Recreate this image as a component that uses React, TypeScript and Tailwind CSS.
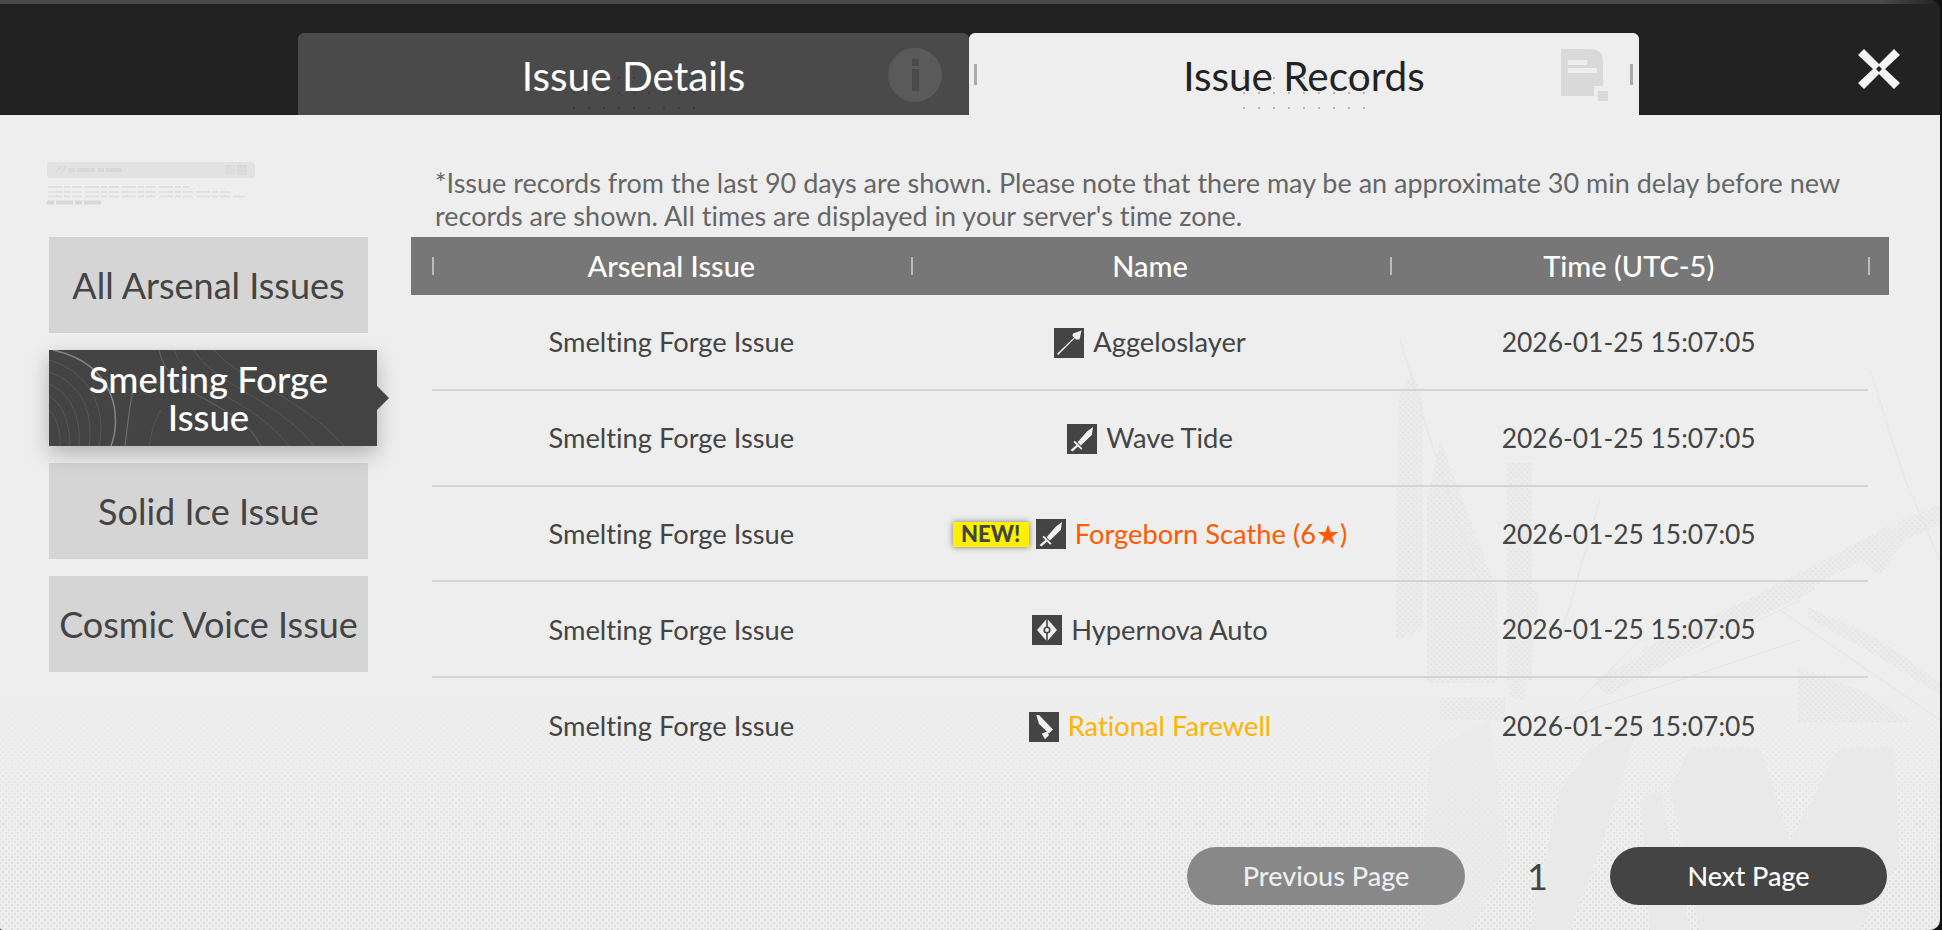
import React from "react";

const font = "font-['Lato','Noto_Sans',sans-serif] [font-variant-ligatures:none]";

type Weapon = "spear" | "sword" | "auto" | "pistol";

const rows: { name: string; icon: Weapon; color: string; isNew?: boolean }[] = [
  { name: "Aggeloslayer", icon: "spear", color: "text-[#444444]" },
  { name: "Wave Tide", icon: "sword", color: "text-[#444444]" },
  { name: "Forgeborn Scathe (6★)", icon: "sword", color: "text-[#ff5a00]", isNew: true },
  { name: "Hypernova Auto", icon: "auto", color: "text-[#444444]" },
  { name: "Rational Farewell", icon: "pistol", color: "text-[#ffb400]" },
];

const WeaponIcon = ({ type }: { type: Weapon }) => (
  <svg viewBox="0 0 30 30" className="w-[30px] h-[30px] shrink-0">
    <rect width="30" height="30" fill="#444444" />
    {type === "spear" && (
      <g fill="#f0f0f0">
        <path d="M27.5 2.5 L25.5 11.5 L22 11.5 L18.5 8 L19 5.5 Z" />
        <path d="M20 9.5 L20.8 10.3 L4.2 27 L3 25.8 Z" />
      </g>
    )}
    {type === "sword" && (
      <g fill="#f0f0f0">
        <path d="M26 3 L24.8 11 L13.8 21.5 L10.5 18.2 L20 7.5 Z" />
        <path d="M6.5 18 L7.8 16.8 L15.5 24.5 L14.2 25.7 Z" />
        <path d="M10 20.5 L11.5 22 L5.5 27.5 L3.5 26 Z" />
      </g>
    )}
    {type === "auto" && (
      <g>
        <path d="M15 3.5 L25 15 L15 26.5 L5 15 Z" fill="#f0f0f0" />
        <rect x="14.2" y="3" width="1.6" height="24" fill="#444444" />
        <circle cx="15" cy="15" r="3.6" fill="#444444" />
        <circle cx="15" cy="15" r="2" fill="#f0f0f0" />
      </g>
    )}
    {type === "pistol" && (
      <g fill="#f0f0f0">
        <path d="M7.3 3.3 L10 3 L24 17.5 L20 21.5 L10 12 Z" />
        <path d="M12.7 21.7 L18.3 19.3 L20 23.3 L16 27.3 Z" />
      </g>
    )}
  </svg>
);

// faint dotted artwork behind the table, drawn in page coordinates
const Watermark = () => (
  <svg viewBox="1240 115 700 815" className="absolute right-0 bottom-0 w-[700px] h-[815px]">
    <defs>
      <pattern id="dots" width="4" height="4" patternUnits="userSpaceOnUse" patternTransform="rotate(45)">
        <rect width="4" height="4" fill="#ececec" />
        <circle cx="2" cy="2" r="1.1" fill="#e3e3e3" />
      </pattern>
    </defs>
    <g fill="url(#dots)">
      <path d="M1398 400 L1412 370 L1423 400 L1423 630 L1396 640 Z" />
      <path d="M1427 500 L1440 440 L1497 590 L1497 683 L1427 683 Z" />
      <path d="M1507 463 L1532 463 L1532 680 L1507 680 Z" />
      <path d="M1595 680 L1890 525 L1900 540 L1606 696 Z" />
      <path d="M1640 650 L1810 570 L1816 590 L1650 668 Z" />
      <path d="M1509 697 L1530 590 L1540 592 L1524 700 Z" />
      <path d="M1798 667 L1860 690 L1915 723 L1798 723 Z" />
      <path d="M1808 607 L1880 640 L1940 682 L1940 695 L1875 655 L1808 618 Z" />
      <path d="M1440 697 L1505 697 L1505 720 L1440 720 Z" />
      <path d="M1860 560 L1900 520 L1940 505 L1940 525 L1905 540 L1880 575 Z" />
    </g>
    <g fill="#e9e9e9">
      <path d="M1690 747 L1760 747 L1790 840 L1840 747 L1894 747 L1900 860 L1860 930 L1700 930 L1670 790 Z" />
      <path d="M1560 790 L1590 750 L1640 720 L1600 850 L1570 930 L1530 930 Z" />
      <path d="M1430 750 L1490 720 L1510 860 L1470 930 L1420 930 Z" opacity="0.7" />
      <path d="M1640 800 L1660 790 L1690 930 L1650 930 Z" />
    </g>
    <g stroke="#e7e7e7" strokeWidth="1.5" fill="none">
      <path d="M1400 340 L1440 470 L1500 640" />
      <path d="M1870 370 L1905 480 L1940 560" />
      <path d="M1580 700 L1640 640 M1700 650 L1800 600 M1560 640 L1600 500" />
      <path d="M1560 720 L1800 640 M1780 610 L1940 720" />
    </g>
  </svg>
);

const SmallPreview = () => (
  <svg viewBox="0 0 210 46" className="w-[210px] h-[46px] ml-[-2px] mb-[29px]">
    <rect width="208" height="16" rx="3" fill="#e2e2e2" />
    <path d="M9 11 L14 4 M14 11 L19 4" stroke="#d8d8d8" strokeWidth="1.5" />
    <path d="M22 8 H28 M30 8 H48 M51 8 H57 M59 8 H75" stroke="#d8d8d8" strokeWidth="4" />
    <rect x="178" y="3" width="10" height="10" fill="#dcdcdc" />
    <rect x="190" y="3" width="10" height="10" fill="#dadada" />
    <g stroke="#e0e0e0" strokeWidth="2" strokeDasharray="14 2 6 2 10 3">
      <path d="M1 25 H142" />
      <path d="M1 30 H185" />
      <path d="M1 34.5 H198" />
    </g>
    <path d="M0 40.5 H7 M9 40.5 H26 M28 40.5 H35 M37 40.5 H54" stroke="#d8d8d8" strokeWidth="4" />
  </svg>
);

const SideButton = ({ label, active }: { label: string; active?: boolean }) =>
  active ? (
    <div className="relative w-[328px] h-[96px] bg-[#444444] shadow-[0_8px_20px_rgba(0,0,0,0.25)] flex items-center justify-center text-center text-white text-[36.5px] leading-[38px] pl-4 pr-[25px] font-medium">
      <svg viewBox="0 0 328 96" className="absolute inset-0 w-full h-full" fill="none" stroke="#ffffff" strokeOpacity="0.1">
        <path d="M4 0 C70 15 72 70 62 96" strokeOpacity="0.35" strokeWidth="1.5" />
        <path d="M0 10 C50 25 56 70 50 96" />
        <path d="M0 22 C38 35 44 70 40 96" />
        <path d="M0 34 C26 45 32 75 30 96" />
        <path d="M0 46 C16 55 22 80 20 96" />
        <path d="M0 60 C8 68 12 82 11 96" />
        <path d="M110 0 C120 50 190 50 212 96" strokeOpacity="0.18" />
        <path d="M125 0 C140 40 200 45 240 96" />
        <path d="M145 0 C165 35 230 50 265 96" />
        <path d="M165 0 C190 30 250 45 295 96" />
        <path d="M84 40 C80 60 78 80 76 96" strokeOpacity="0.25" />
        <path d="M112 60 C105 70 102 85 100 96" />
      </svg>
      <span className="relative">{label}</span>
      <div className="absolute right-[-12px] top-[36px] w-0 h-0 border-y-[12px] border-y-transparent border-l-[12px] border-l-[#444444]" />
    </div>
  ) : (
    <div className="w-[319px] h-[96px] bg-[#d5d5d5] flex items-center justify-center text-center text-[#444444] text-[36px] leading-[38px] px-2">
      {label}
    </div>
  );

const TabDots = ({ color }: { color: string }) => (
  <div className="absolute left-1/2 -translate-x-1/2 top-[44px] w-[122px] h-[32px] flex flex-col justify-between">
    <div className={`h-[2px] bg-[length:15px_2px] ${color}`} />
    <div className={`h-[2px] bg-[length:15px_2px] ${color}`} />
    <div className={`h-[2px] bg-[length:15px_2px] ${color}`} />
  </div>
);

export default function App() {
  return (
    <div className={`w-[1942px] h-[930px] bg-[#111111] overflow-hidden ${font}`}>
      <div className="w-[1940px] h-[930px] rounded-r-[10px] rounded-bl-[3px] overflow-hidden flex flex-col bg-[#222222] relative">
        <div className="h-1 bg-[linear-gradient(to_right,#4a4a48_97%,#222222)]" />
        {/* tabs */}
        <div className="h-[111px] flex items-end pl-[298px] relative">
          <div className="relative w-[671px] h-[82px] rounded-t-[6px] bg-[#4a4a4a] flex items-center justify-center text-white text-[40.5px]">
            <TabDots color="bg-[linear-gradient(to_right,#3c3c3c_2px,transparent_2px)]" />
            <span className="relative top-[2px]">Issue Details</span>
            <div className="absolute right-[27px] top-[15px] w-[54px] h-[54px] rounded-full bg-[#5a5a5a] flex flex-col items-center justify-center gap-[3px]">
              <div className="w-[7px] h-[7px] bg-[#4a4a4a]" />
              <div className="w-[7px] h-[22px] bg-[#4a4a4a]" />
            </div>
          </div>
          <div className="relative w-[670px] h-[82px] rounded-t-[6px] bg-[#eeeeee] flex items-center justify-center text-[#222222] text-[40.5px]">
            <TabDots color="bg-[linear-gradient(to_right,#b5b5b5_2px,transparent_2px)]" />
            <span className="relative top-[2px]">Issue Records</span>
            <div className="absolute left-[5px] top-[31px] w-[3px] h-[21px] bg-[#aaaaaa]" />
            <div className="absolute right-[6px] top-[31px] w-[3px] h-[21px] bg-[#aaaaaa]" />
            <svg viewBox="0 0 48 52" className="absolute right-[30px] top-[16px] w-[48px] h-[52px]" fill="#d9d9d9">
              <path d="M0 0 H29 Q42 0 42 13 V37 H33 V47 H0 Z" />
              <rect x="7" y="11" width="19" height="5" fill="#eeeeee" />
              <rect x="7" y="19" width="29" height="5" fill="#eeeeee" />
              <rect x="37" y="42" width="10" height="10" />
            </svg>
          </div>
          <svg viewBox="0 0 42 40" className="absolute left-[1858px] top-[45px] w-[42px] h-[40px]" fill="#f4f4f4">
            <path
              fillRule="evenodd"
              d="M6 0 L21 15 L36 0 L42 6 L27 20 L42 34 L36 40 L21 25 L6 40 L0 34 L15 20 L0 6 Z M21 17 L24 20 L21 23 L18 20 Z"
            />
          </svg>
        </div>

        {/* body */}
        <div className="flex-1 relative bg-[#eeeeee] flex pt-[47px] overflow-hidden">
          <div className="absolute inset-x-0 bottom-0 h-[235px] bg-[radial-gradient(circle,#dfdfdf_1px,transparent_1.5px),radial-gradient(circle,#dfdfdf_1px,transparent_1.5px)] bg-[length:6px_6px] bg-[position:0_0,3px_3px] [mask-image:linear-gradient(to_bottom,transparent,black_70%)]" />
          <Watermark />

          <aside className="relative w-[411px] shrink-0 pl-[49px]">
            <SmallPreview />
            <div className="flex flex-col gap-[17px]">
              <SideButton label="All Arsenal Issues" />
              <SideButton label="Smelting Forge Issue" active />
              <SideButton label="Solid Ice Issue" />
              <SideButton label="Cosmic Voice Issue" />
            </div>
          </aside>

          <main className="relative w-[1478px] -mt-[47px] flex flex-col">
            <p className="pl-[24px] pr-[30px] pt-[51px] h-[122px] text-[27px] leading-[33px] text-[#666666]">
              *Issue records from the last 90 days are shown. Please note that there may be an approximate 30 min delay before new records are shown. All times are displayed in your server's time zone.
            </p>
            <div className="h-[58px] bg-[#777777] px-[21px] flex items-center text-white text-[29px] font-medium relative">
              {["Arsenal Issue", "Name", "Time (UTC-5)"].map((h) => (
                <div key={h} className="flex-1 text-center">{h}</div>
              ))}
              <div className="absolute left-[21px] top-[20px] w-[2px] h-[18px] bg-[#bbbbbb]" />
              <div className="absolute left-[500px] top-[20px] w-[2px] h-[18px] bg-[#bbbbbb]" />
              <div className="absolute left-[979px] top-[20px] w-[2px] h-[18px] bg-[#bbbbbb]" />
              <div className="absolute left-[1457px] top-[20px] w-[2px] h-[18px] bg-[#bbbbbb]" />
            </div>
            <div className="mx-[21px] w-[1436px] flex-none">
              {rows.map((r, i) => (
                <div
                  key={r.name}
                  className={`h-[95.75px] pt-[2px] flex items-center text-[27.3px] text-[#444444] ${i < rows.length - 1 ? "border-b-2 border-[#d4d4d4]" : ""}`}
                >
                  <div className="flex-1 text-center">Smelting Forge Issue</div>
                  <div className="flex-1 flex items-center justify-center">
                    {r.isNew && (
                      <span className="mr-[7px] w-[76px] h-[25px] bg-[#fff000] shadow-[0_0_6px_rgba(0,0,0,0.5)] flex items-center justify-center text-[22px] font-black text-[#444444] leading-none">
                        NEW!
                      </span>
                    )}
                    <WeaponIcon type={r.icon} />
                    <span className={`ml-[9px] ${r.color}`}>{r.name}</span>
                  </div>
                  <div className="flex-1 text-center text-[26.4px]">2026-01-25 15:07:05</div>
                </div>
              ))}
            </div>
            <div className="mt-auto mb-[25px] ml-[776px] w-[700px] flex items-center text-white text-[27px] font-medium">
              <div className="w-[278px] h-[58px] rounded-full bg-[#888888] flex items-center justify-center text-[#eeeeee]">Previous Page</div>
              <div className="w-[145px] text-center text-[36px] text-[#444444] font-normal">1</div>
              <div className="w-[277px] h-[58px] rounded-full bg-[#444444] flex items-center justify-center">Next Page</div>
            </div>
          </main>
        </div>
      </div>
    </div>
  );
}
